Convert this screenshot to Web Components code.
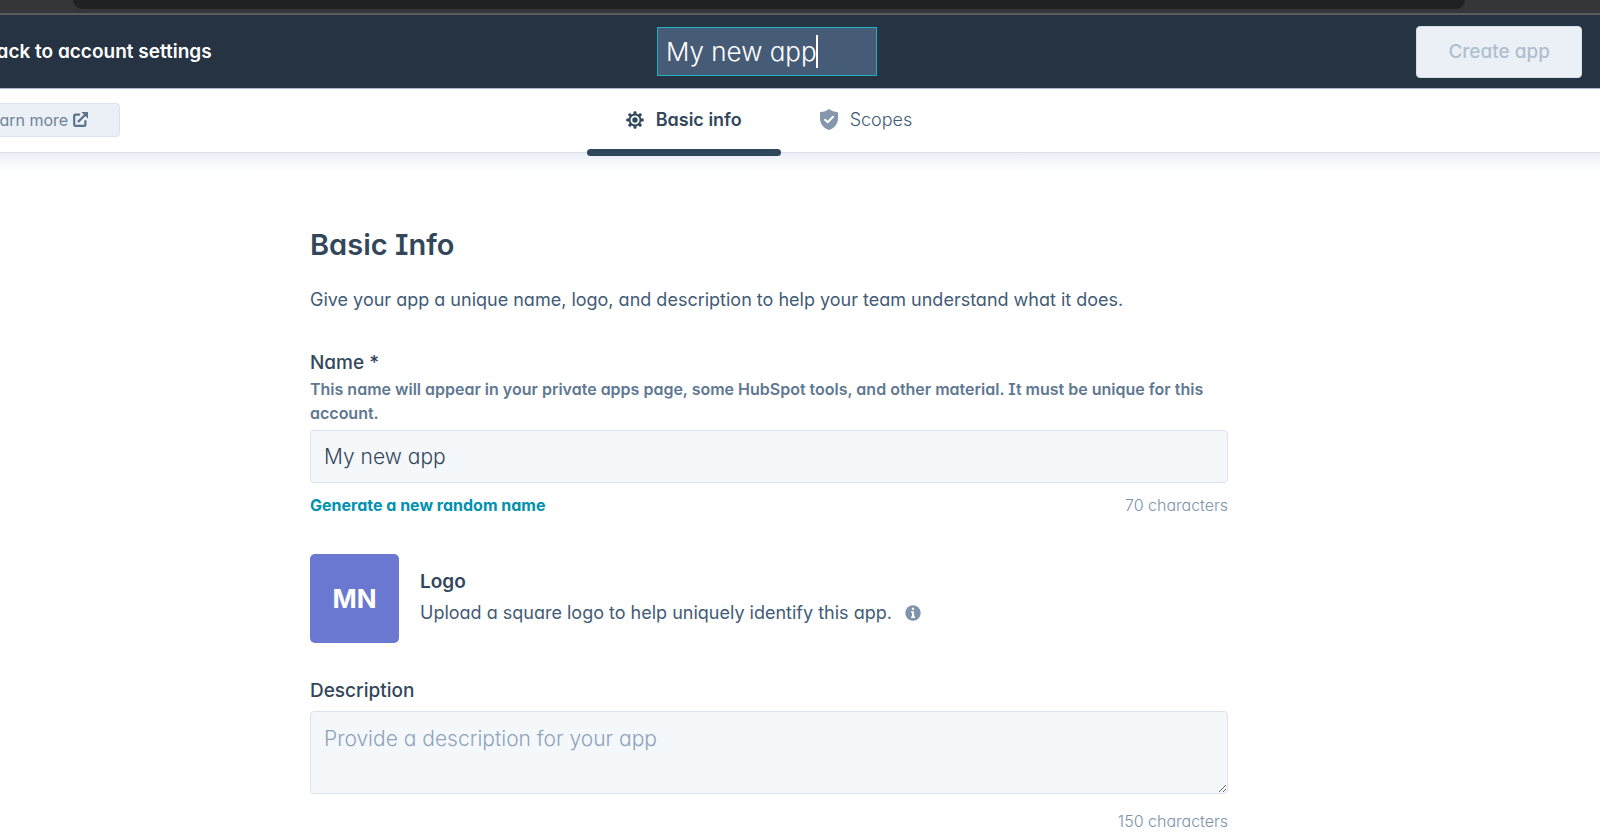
<!DOCTYPE html>
<html lang="en">
<head>
<meta charset="utf-8">
<title>Create a private app</title>
<style>
  html, body { margin: 0; background: #fff; }
  body {
    overflow: hidden;
    font-family: Inter, "Liberation Sans", sans-serif;
    font-size: 18px;
    line-height: 26px;
    font-feature-settings: "cv11", "cv08";
    color: #425b76;
    --ink: #33475b;
    --line: #dbe3ee;
    --field: #f5f8fb;
    --muted: #8ea3ba;
    /* the page is scrolled a little to the right */
    --scroll: 62px;
  }
</style>
</head>
<body>
<browser-edge></browser-edge>
<app-header name="My new app">
  <span slot="back">Back to account settings</span>
  <span slot="action">Create app</span>
</app-header>
<app-nav>
  <learn-more slot="start">Learn more</learn-more>
  <nav-tab selected><ui-icon slot="icon" name="gear"></ui-icon>Basic info</nav-tab>
  <nav-tab><ui-icon slot="icon" name="shield"></ui-icon>Scopes</nav-tab>
</app-nav>
<basic-info-form></basic-info-form>

<script>
  const define = (name, html, setup) => {
    const template = document.createElement('template');
    template.innerHTML = html;
    customElements.define(name, class extends HTMLElement {
      connectedCallback() {
        if (this.shadowRoot) return;
        this.attachShadow({ mode: 'open' }).append(template.content.cloneNode(true));
        if (setup) setup(this, this.shadowRoot);
      }
    });
  };

  const teeth = [0, 45, 90, 135, 180, 225, 270, 315]
    .map(a => `<rect x="7.5" y="0.2" width="3" height="4" rx="1.2" transform="rotate(${a} 9 9)"/>`).join('');

  const icons = {
    gear: `<svg width="18" height="18" viewBox="0 0 18 18" fill="#33475b">${teeth}
      <circle cx="9" cy="9" r="5.500" fill="none" stroke="#33475b" stroke-width="1.900"/><circle cx="9" cy="9" r="2.700"/></svg>`,
    shield: `<svg width="18" height="21" viewBox="0 0 18 21"><path fill="#8597ad" d="M9 0C6.600 2 3.500 3 .8 3.100.3 3.200 0 3.500 0 4v5.500C0 15 3.500 19 9 21c5.500-2 9-6 9-11.500V4c0-.5-.3-.8-.8-.9C14.500 3 11.400 2 9 0z"/>
      <path fill="none" stroke="#fff" stroke-width="2" stroke-linecap="round" stroke-linejoin="round" d="M5 10.700l2.700 2.500 5.300-5.500"/></svg>`,
    external: `<svg width="15" height="15" viewBox="0 0 15 15" fill="none" stroke="#5b728b" stroke-width="2.200"><path stroke-linecap="round" stroke-linejoin="round" d="M6.200 2.600H2.600Q1.200 2.600 1.200 4v8.400q0 1.400 1.400 1.400H11q1.400 0 1.400-1.400V9.200M5.600 9.400L12 3"/><path fill="#5b728b" stroke="none" d="M8.300 0H14.500Q15 0 15 .5V6.700L12.900 4.600 10.400 2.100z"/></svg>`,
    info: `<svg width="16" height="16" viewBox="0 0 16 16"><circle cx="8" cy="8" r="7.700" fill="#7f93aa"/><path fill="#fff" d="M6.900 2.800h2.200v2.200H6.900zM6 6.300h3.100v5.100H10.100v1.500H6v-1.500h1V7.800H6z"/></svg>`
  };

  define('ui-icon', `<style>:host { display: inline-flex; flex: none; } svg { display: block; }</style>`,
    (host, root) => root.append(Object.assign(document.createElement('template'),
      { innerHTML: icons[host.getAttribute('name')] }).content));

  define('browser-edge', `<style>
    :host { display: block; padding: 0 135px 4px 73px; background: #35363a; border-bottom: 2px solid #5b5c5f; }
    div { height: 9px; background: #202124; border-radius: 0 0 14px 14px; }
  </style><div></div>`);

  define('app-header', `<style>
    :host {
      display: grid; grid-template-columns: 1fr auto 1fr; align-items: center;
      margin-left: calc(-1 * var(--scroll)); padding: 0 18px 0 14px;
      height: 73px; background: #253342; border-bottom: 1px solid #a9b9ca;
    }
    a { margin-left: 32px; color: #fff; font-size: 19px; font-weight: 600; text-decoration: none; }
    .title { position: relative; display: flex; }
    input {
      box-sizing: border-box; width: 220px; height: 49px; padding: 0 8px; margin: 0;
      border: 1px solid #1fb0c6; background: #465b75; color: #fff; outline: 0;
      font: 300 26px Inter, sans-serif; font-feature-settings: inherit;
    }
    .caret { position: absolute; left: 159px; top: 8px; width: 2px; height: 33px; background: #fff; }
    button {
      justify-self: end; height: 52px; padding: 0 31px; border: 1px solid #d5dfea; border-radius: 4px;
      background: #eaf0f6; color: #b0bfcf; font: 500 19px Inter, sans-serif; font-feature-settings: inherit;
    }
  </style>
  <a href="#settings"><slot name="back"></slot></a>
  <div class="title"><input aria-label="App name"><span class="caret"></span></div>
  <button type="button" disabled><slot name="action"></slot></button>`,
    (host, root) => { root.querySelector('input').value = host.getAttribute('name'); });

  define('app-nav', `<style>
    :host {
      display: grid; grid-template-columns: 1fr auto 1fr; align-items: center; position: relative;
      margin-left: calc(-1 * var(--scroll)); height: 61px; padding-bottom: 2px;
      border-bottom: 1px solid #dcdfea; background: #fff;
    }
    nav { display: flex; height: 61px; }
    .shade { position: absolute; left: 0; right: 0; top: 64px; height: 19px; background: linear-gradient(#ebeff6, #f5f8fb 50%, #fff); }
  </style>
  <div class="shade"></div><slot name="start"></slot><nav><slot></slot></nav>`);

  define('learn-more', `<style>
    :host { display: flex; }
    a {
      display: flex; align-items: center; gap: 5px; box-sizing: border-box; height: 34px;
      padding: 0 31px; margin-left: 11px; border: 1px solid var(--line); border-radius: 4px;
      background: #eaf0f6; color: #6f8499; font-size: 16px; line-height: 24px; text-decoration: none;
    }
  </style><a href="#docs"><slot></slot><ui-icon name="external"></ui-icon></a>`);

  define('nav-tab', `<style>
    :host { display: flex; position: relative; }
    a { display: flex; align-items: center; gap: 12px; padding: 0 39px; color: #425b76; text-decoration: none; font-weight: 300; }
    :host([selected]) a { color: var(--ink); font-weight: 600; }
    :host([selected])::after { content: ""; position: absolute; left: 0; right: 0; bottom: -6px; height: 7px; border-radius: 4px; background: #2f475c; }
  </style><a href="#tab"><slot name="icon"></slot><span><slot></slot></span></a>`);

  define('app-logo', `<style>
    :host { display: flex; align-items: center; gap: 21px; }
    .tile {
      display: grid; place-items: center; width: 89px; height: 89px; border-radius: 5px;
      background: #6a78d1; color: #fff; font-size: 26px; font-weight: 700;
    }
    h2 { margin: 0 0 6px; color: var(--ink); font-size: 19px; line-height: 24px; font-weight: 600; }
    p { display: flex; align-items: center; gap: 13px; margin: 0 0 2px; }
  </style>
  <div class="tile"><slot name="initials"></slot></div>
  <div><h2><slot name="title"></slot></h2><p><slot></slot><ui-icon name="info"></ui-icon></p></div>`);

  define('basic-info-form', `<style>
    :host { display: block; margin-left: calc(-1 * var(--scroll)); }
    form { box-sizing: border-box; max-width: 918px; margin: 0 auto; padding: 74px 0 6px; }
    h1 { margin: 0 0 24px; color: var(--ink); font-size: 29px; line-height: 36px; font-weight: 600; }
    p { margin: 0; }
    label { display: block; color: var(--ink); font-size: 19px; line-height: 24px; font-weight: 500; }
    .lead { margin-bottom: 38px; }
    .help { margin: 2px 0 5px; color: #5f7891; font-size: 16px; line-height: 24px; font-weight: 600; }
    input, textarea {
      display: block; box-sizing: border-box; width: 100%; margin: 0; padding: 0 13px;
      border: 1px solid var(--line); border-radius: 4px; background: var(--field); color: var(--ink);
      font: 300 21px/28px Inter, sans-serif; font-feature-settings: inherit; outline: 0;
    }
    input { height: 53px; }
    textarea { height: 83px; padding: 13px 13px 0; margin-top: 8px; resize: vertical; }
    ::placeholder { color: var(--muted); opacity: 1; }
    .row { display: flex; justify-content: space-between; margin-top: 10px; font-size: 16px; line-height: 24px; font-weight: 300; color: #7c93ac; }
    .row.end { justify-content: flex-end; margin-top: 15px; }
    .row a { color: #0091ae; font-weight: 700; text-decoration: none; }
    app-logo { margin: 37px 0 36px; }
  </style>
  <form>
    <h1>Basic Info</h1>
    <p class="lead">Give your app a unique name, logo, and description to help your team understand what it does.</p>
    <label for="name">Name *</label>
    <p class="help" id="name-help">This name will appear in your private apps page, some HubSpot tools, and other material. It must be unique for this account.</p>
    <input id="name" value="My new app" aria-describedby="name-help">
    <div class="row"><a href="#random">Generate a new random name</a><span>70 characters</span></div>
    <app-logo>
      <span slot="initials">MN</span>
      <span slot="title">Logo</span>
      <span>Upload a square logo to help uniquely identify this app.</span>
    </app-logo>
    <label for="description">Description</label>
    <textarea id="description" placeholder="Provide a description for your app"></textarea>
    <div class="row end"><span>150 characters</span></div>
  </form>`);
</script>
</body>
</html>
